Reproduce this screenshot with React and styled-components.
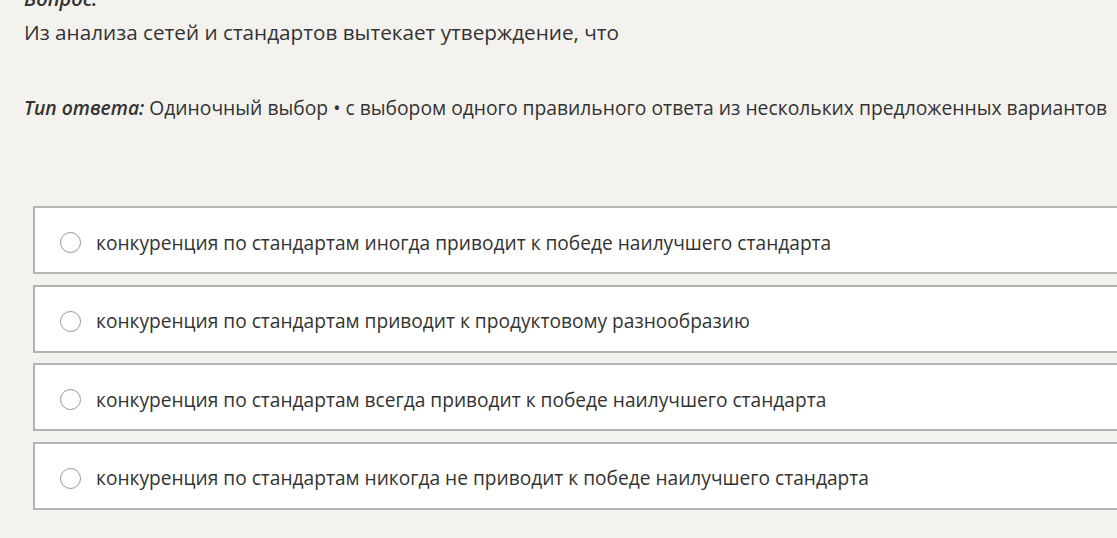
import React from "react";
import styled, { createGlobalStyle } from "styled-components";

const GlobalStyle = createGlobalStyle`
  html, body {
    margin: 0;
    padding: 0;
    background: #f3f2ef;
    overflow: hidden;
  }
  body {
    font-family: "Open Sans", "Noto Sans", sans-serif;
    color: #333;
  }
`;

const Page = styled.div`
  width: 1117px;
  height: 538px;
  overflow: hidden;
  padding: 0 0 0 24px;
  box-sizing: border-box;
`;

const Label = styled.div`
  font-size: 20px;
  font-weight: 600;
  font-style: italic;
  line-height: 24px;
  margin-top: -13px;
`;

const Question = styled.p`
  margin: 7px 0 0;
  font-size: 20.7px;
  line-height: 28px;
`;

const AnswerType = styled.p`
  margin: 48px 0 0;
  font-size: 19.3px;
  line-height: 28px;
  white-space: nowrap;

  em {
    font-weight: 600;
  }
`;

const Options = styled.div`
  display: flex;
  flex-direction: column;
  gap: 10.5px;
  margin: 84px 0 0 9px;
`;

const Option = styled.label`
  display: flex;
  align-items: center;
  gap: 15px;
  width: 1120px;
  height: 68px;
  box-sizing: border-box;
  padding: 5px 0 0 25px;
  background: #fff;
  border: 2px solid #b3b3b1;
  font-size: 19.15px;
  color: #333;
  cursor: pointer;
`;

const Radio = styled.span`
  width: 19px;
  height: 19px;
  border: 1.5px solid #959595;
  border-radius: 50%;
  flex: none;
`;

const options = [
  "конкуренция по стандартам иногда приводит к победе наилучшего стандарта",
  "конкуренция по стандартам приводит к продуктовому разнообразию",
  "конкуренция по стандартам всегда приводит к победе наилучшего стандарта",
  "конкуренция по стандартам никогда не приводит к победе наилучшего стандарта"
];

export default function App() {
  return (
    <Page>
      <GlobalStyle />
      <Label>Вопрос:</Label>
      <Question>Из анализа сетей и стандартов вытекает утверждение, что</Question>
      <AnswerType>
        <em>Тип ответа:</em> Одиночный выбор • с выбором одного правильного
        ответа из нескольких предложенных вариантов
      </AnswerType>
      <Options>
        {options.map(text => (
          <Option key={text}>
            <Radio />
            {text}
          </Option>
        ))}
      </Options>
    </Page>
  );
}
